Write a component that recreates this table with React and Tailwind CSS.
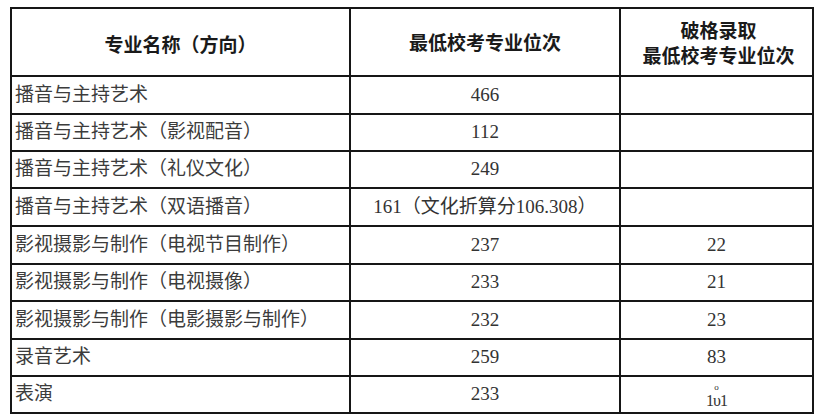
import React from "react";

const rows = [
  { name: "播音与主持艺术", rank: "466", extra: "", h: "h-[38px]" },
  { name: "播音与主持艺术（影视配音）", rank: "112", extra: "", h: "h-[37px]" },
  { name: "播音与主持艺术（礼仪文化）", rank: "249", extra: "", h: "h-[37px]" },
  { name: "播音与主持艺术（双语播音）", rank: "161（文化折算分106.308）", extra: "", h: "h-[38px]" },
  { name: "影视摄影与制作（电视节目制作）", rank: "237", extra: "22", h: "h-[38px]" },
  { name: "影视摄影与制作（电视摄像）", rank: "233", extra: "21", h: "h-[37px]" },
  { name: "影视摄影与制作（电影摄影与制作）", rank: "232", extra: "23", h: "h-[38px]" },
  { name: "录音艺术", rank: "259", extra: "83", h: "h-[37px]" },
  { name: "表演", rank: "233", extra: "odd", h: "h-[37px]" },
];

function OddMark() {
  // smeared "101"-like glyph from the scan
  return (
    <span className="inline-flex flex-col items-center align-middle text-[#333]">
      <span className="text-[9px] leading-[10px]">o</span>
      <span className="text-[16px] leading-[17px] tracking-[-1px]">1υ1</span>
    </span>
  );
}

export default function App() {
  return (
    <div className="w-[824px] h-[417px] bg-white pl-[10px] pt-[7px] overflow-hidden font-['Liberation_Serif','Noto_Sans_CJK_SC',serif]">
      <table className="w-[802px] border-collapse border-2 border-[#161616] table-fixed">
        <colgroup>
          <col className="w-[339px]" />
          <col className="w-[270px]" />
          <col className="w-[193px]" />
        </colgroup>
        <thead>
          <tr className="h-[68px]">
            <th className="border-2 border-[#161616] text-center text-[19px] font-bold text-[#1a1a1a] font-['Noto_Sans_CJK_SC',sans-serif] pt-1">
              专业名称（方向）
            </th>
            <th className="border-2 border-[#161616] text-center text-[19px] font-bold text-[#1a1a1a] font-['Noto_Sans_CJK_SC',sans-serif]">
              最低校考专业位次
            </th>
            <th className="border-2 border-[#161616] text-center text-[19px] font-bold text-[#1a1a1a] leading-[25px] font-['Noto_Sans_CJK_SC',sans-serif] pl-1">
              破格录取
              <br />
              最低校考专业位次
            </th>
          </tr>
        </thead>
        <tbody>
          {rows.map((r) => (
            <tr key={r.name} className={r.h}>
              <td className="border-2 border-[#161616] pl-[3px] text-[19px] text-[#3c3c3c] whitespace-nowrap">
                {r.name}
              </td>
              <td className="border-2 border-[#161616] text-center text-[19px] text-[#333] whitespace-nowrap">
                {r.rank}
              </td>
              <td className="border-2 border-[#161616] text-center text-[19px] text-[#333] align-middle">
                {r.extra === "odd" ? <OddMark /> : r.extra}
              </td>
            </tr>
          ))}
        </tbody>
      </table>
    </div>
  );
}
